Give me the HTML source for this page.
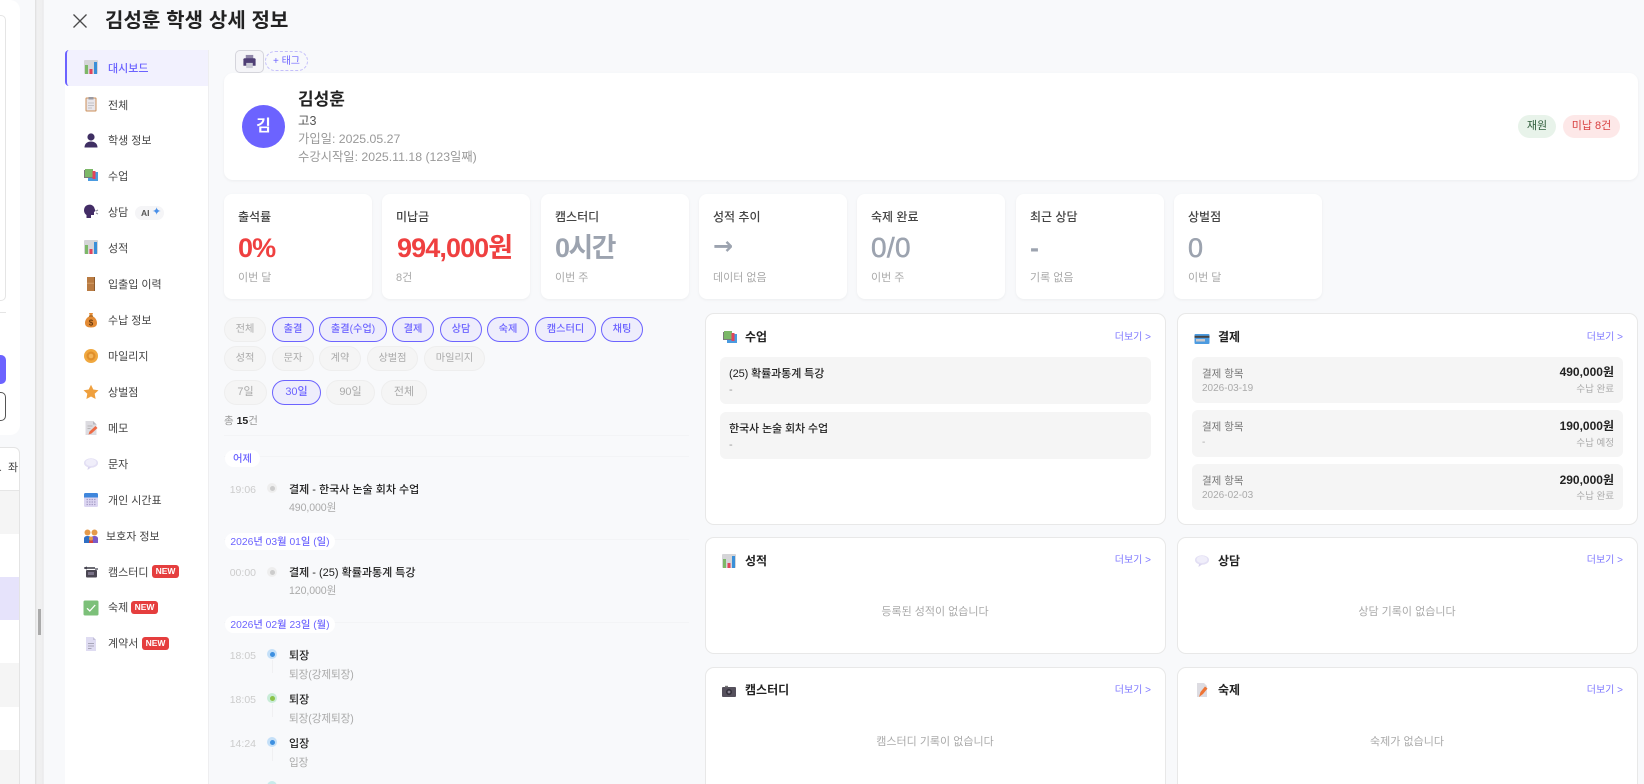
<!DOCTYPE html>
<html lang="ko"><head><meta charset="utf-8"><title>김성훈 학생 상세 정보</title>
<style>
*{box-sizing:border-box}
html,body{margin:0;padding:0;width:1644px;height:784px;overflow:hidden;background:#f8f9fb}
body{position:relative;font-family:"Liberation Sans","Noto Sans CJK KR",sans-serif;color:#222}
.a{position:absolute}
.t{position:absolute;white-space:nowrap;line-height:20px;height:20px}
.i{position:absolute;width:16px;height:16px}
.nav{font-size:11px;color:#444;left:108px;margin-top:1px}
.new{position:absolute;height:13px;background:#e53e3e;color:#fff;font-size:8.5px;font-weight:bold;line-height:13px;border-radius:3px;text-align:center;width:27px}
.stat{position:absolute;top:194px;height:105px;width:148px;background:#fff;border-radius:8px;box-shadow:0 1px 3px rgba(0,0,0,.05)}
.l{left:14px;top:13px;font-size:12px;color:#444;font-weight:500}
.v{left:14px;top:44px;font-size:27px;font-weight:bold;color:#9ca3af;letter-spacing:-.9px;line-height:20px}
.s{left:14px;top:74px;font-size:11px;color:#aaa}
.p{position:absolute;height:25px;border-radius:13px;border:1px solid #eee;background:#f5f5f5;color:#aaa;font-size:10.2px;line-height:23px;text-align:center;white-space:nowrap}
.on{background:#eeedfc;border-color:#6c63ff;color:#6c63ff;font-weight:500}
.d{position:absolute;left:225px;height:17px;background:#fff;border-radius:9px;color:#6c63ff;font-size:10.3px;font-weight:500;line-height:19px;text-align:center;white-space:nowrap}
.ln{position:absolute;height:1px;background:#f3f4f6;left:224px;width:465px}
.tm{left:216px;width:40px;text-align:right;font-size:10.5px;color:#ccc;margin-top:1px}
.ti{left:289px;font-size:11px;color:#222;font-weight:500;margin-top:1px}
.su{left:289px;font-size:10.6px;color:#aaa;letter-spacing:-.1px;margin-top:1px}
.o{position:absolute;left:267px;width:10px;height:10px;border-radius:50%}
.o b{position:absolute;left:2.5px;top:2.5px;width:5px;height:5px;border-radius:50%}
.vl{position:absolute;left:272px;width:1px;height:13px;background:#f0f0f2}
.c{position:absolute;background:#fff;border:1px solid #e8e8e8;border-radius:9px;width:461px}
.ct{font-size:12px;font-weight:bold;color:#222;margin-top:1px}
.m{font-size:10px;color:#7f78ff;text-align:right;width:60px}
.b{position:absolute;background:#f5f5f5;border-radius:6px;width:431px}
.bt{font-size:11px;font-weight:500;color:#222;letter-spacing:-.1px;margin-top:1px}
.e{font-size:11px;color:#aaa;width:300px;text-align:center;margin-top:1px}
.g{font-size:10.5px;color:#777;margin-top:1px}
.h{font-size:10px;color:#aaa;margin-top:1px}
.am{font-size:12px;font-weight:bold;color:#222;text-align:right;width:100px;margin-top:-1px}
.st{font-size:9.5px;color:#aaa;text-align:right;width:100px;margin-top:2px}
</style></head><body>
<svg width="0" height="0" style="position:absolute">
<symbol id="chart" viewBox="0 0 16 16"><rect x="1" y="1" width="14" height="14" rx="1" fill="#d5d5d8"/><rect x="2" y="6" width="3" height="9" fill="#7cb868"/><rect x="6.5" y="10" width="3" height="5" fill="#e2445c"/><rect x="11" y="3" width="3" height="12" fill="#3a8fd8"/></symbol>
<symbol id="clip" viewBox="0 0 16 16"><rect x="2.500" y="1.500" width="11" height="14" rx="1" fill="#cc8f58"/><rect x="3.500" y="2.500" width="9" height="12" fill="#e9e6ea"/><rect x="5.500" y="1" width="5" height="2.500" fill="#9a9aa2"/><path d="M5 7h6M5 9.500h6M5 12h4" stroke="#b5b5bb" stroke-width=".8"/></symbol>
<symbol id="bust" viewBox="0 0 16 16"><circle cx="8" cy="5" r="3.600" fill="#3f2f63"/><path d="M1.500 15.500c0-4 3-6 6.500-6s6.500 2 6.500 6z" fill="#3f2f63"/></symbol>
<symbol id="books" viewBox="0 0 16 16"><rect x="5" y="5" width="10" height="9" fill="#4a9be0"/><rect x="1" y="3" width="9" height="8" fill="#7a7a7a"/><rect x="2" y="2" width="8" height="8" fill="#7cb868"/><rect x="9.500" y="4" width="3" height="8" fill="#e2445c"/></symbol>
<symbol id="talk" viewBox="0 0 16 16"><path d="M1 7a5.500 5.500 0 0 1 10-3l1.500 4-1.500 1v3H8v3H3.500v-3C2 11 1 9.500 1 7z" fill="#432d66"/><path d="M13 8l2-1M13 10l2 1" stroke="#8a8a96" stroke-width="1"/></symbol>
<symbol id="door" viewBox="0 0 16 16"><rect x="4" y="1" width="8" height="14" fill="#b97b42"/><rect x="4" y="6.800" width="8" height=".8" fill="#d8a56e"/><rect x="11" y="1" width="1" height="14" fill="#8d5a2c"/></symbol>
<symbol id="bag" viewBox="0 0 16 16"><path d="M6 1h4l-1 3c3 1 5 4 5 7 0 3-2 4.500-6 4.500S2 14 2 11c0-3 2-6 5-7z" fill="#e38b35"/><rect x="6" y="3.500" width="4" height="1" fill="#8c5a20"/><text x="8" y="13.300" font-size="8" font-weight="bold" text-anchor="middle" fill="#6d3d10" font-family="Liberation Sans">$</text></symbol>
<symbol id="coin" viewBox="0 0 16 16"><circle cx="8" cy="8" r="7" fill="#f0a83f"/><circle cx="8" cy="8" r="4.500" fill="#e08f2c"/><circle cx="8" cy="8" r="2.300" fill="#f3b55a"/></symbol>
<symbol id="star" viewBox="0 0 16 16"><path d="M8 .8l2.300 4.700 5.200.7-3.800 3.600.9 5.200L8 12.500l-4.600 2.500.9-5.200L.5 6.200l5.200-.7z" fill="#efa03e"/></symbol>
<symbol id="memo" viewBox="0 0 16 16"><path d="M2.500 1H10l3.500 3.500V15h-11z" fill="#dcdbe0"/><path d="M10 1v3.500h3.500z" fill="#b9b8c0"/><path d="M4.500 6h5M4.500 8.500h3" stroke="#aaa" stroke-width=".8"/><path d="M5.500 14.500l1-3L12.500 6l2 2-6 5.500z" fill="#ee6b45"/></symbol>
<symbol id="bub" viewBox="0 0 16 16"><ellipse cx="8" cy="7" rx="7" ry="4.800" fill="#e3dff4"/><ellipse cx="8" cy="6.500" rx="5.500" ry="3.500" fill="#f0eefa"/><path d="M5 11l-.5 3L8 11.500z" fill="#d8d3ee"/></symbol>
<symbol id="cal" viewBox="0 0 16 16"><rect x="1" y="1" width="14" height="14" rx="1.500" fill="#dcd6f2"/><path d="M1 5.500v-3A1.500 1.500 0 0 1 2.500 1h11A1.500 1.500 0 0 1 15 2.500v3z" fill="#3f86dc"/><path d="M3.500 7.500h9M3.500 10h9M3.500 12.500h9" stroke="#a89fc8" stroke-width="1.200" stroke-dasharray="1.500 1"/></symbol>
<symbol id="fam" viewBox="0 0 16 16"><circle cx="4.500" cy="4.500" r="3" fill="#e59a4a"/><circle cx="11.500" cy="4.500" r="3" fill="#e59a4a"/><path d="M1 15V10.500C1 8.500 3 8 4.500 8S8 8.500 8 10.500V15z" fill="#2f6fc4"/><path d="M8 15V10.500C8 8.500 10 8 11.500 8S15 8.500 15 10.500V15z" fill="#7a5ac8"/><circle cx="8" cy="10.500" r="2" fill="#e59a4a"/><rect x="6" y="12.500" width="4" height="2.500" fill="#d8453a"/></symbol>
<symbol id="cam" viewBox="0 0 16 16"><rect x="3" y="3" width="9" height="2" fill="#6a6a72"/><path d="M1 3.500l3-1v3l-3-1z" fill="#44424f"/><rect x="3" y="6" width="11" height="7.500" rx="1" fill="#4a4652"/><rect x="5" y="8" width="6" height="3" fill="#7a7388"/><rect x="12" y="4" width="3" height="2" fill="#8c8c94"/></symbol>
<symbol id="cam2" viewBox="0 0 16 16"><rect x="1" y="4" width="14" height="10" rx="1" fill="#55505c"/><rect x="4" y="2.800" width="3" height="1.500" fill="#777"/><circle cx="8" cy="9" r="3" fill="#33303a"/><circle cx="8" cy="9" r="1.400" fill="#8d8796"/></symbol>
<symbol id="chk" viewBox="0 0 16 16"><rect x="0.500" y="0.500" width="15" height="15" rx="1.500" fill="#7cc079"/><path d="M4 8.300l2.800 2.700L12.200 5" fill="none" stroke="#fff" stroke-width="1.300"/></symbol>
<symbol id="doc" viewBox="0 0 16 16"><path d="M3 1h7l3 3v11H3z" fill="#dfdcf2"/><path d="M10 1v3h3z" fill="#c4c0da"/><path d="M5 7.500h6M5 10h6M5 12.500h3.500" stroke="#a8a6b8" stroke-width="1"/></symbol>
<symbol id="card" viewBox="0 0 16 16"><rect x="0.500" y="3" width="15" height="10" rx="1" fill="#4c9be0"/><rect x="0.500" y="4.800" width="15" height="2" fill="#444"/><rect x="2" y="8" width="9" height="2.500" fill="#c7c7cd"/></symbol>
<symbol id="prn" viewBox="0 0 16 16"><rect x="4" y="1" width="8" height="5" fill="#8f86a8"/><path d="M1.500 6.500A1.500 1.500 0 0 1 3 4.500h10a1.500 1.500 0 0 1 1.500 2V12.500h-13z" fill="#4f3f75"/><rect x="4.500" y="9.500" width="7" height="5.500" fill="#c9c9d4"/></symbol>
<symbol id="memo2" viewBox="0 0 16 16"><path d="M3 1h7l3 3v11H3z" fill="#dddce2"/><path d="M5 15l1.500-5L11 4.500l2.500 2-4.500 5.500z" fill="#ee7435"/></symbol>
</svg>

<!-- left background page -->
<div class="a" style="left:-20px;top:0;width:40px;height:435px;background:#fff;border-radius:0 10px 10px 0"></div>
<div class="a" style="left:-20px;top:15px;width:26px;height:286px;background:#fff;border:1px solid #e5e5e5;border-radius:5px"></div>
<div class="a" style="left:0;top:312px;width:6px;height:1px;background:#e5e5e5"></div>
<div class="a" style="left:-20px;top:355px;width:26px;height:29px;background:#6c63ff;border-radius:5px"></div>
<div class="a" style="left:-20px;top:392px;width:26px;height:29px;background:#fff;border:1px solid #555;border-radius:5px"></div>
<div class="a" style="left:-20px;top:447px;width:40px;height:337px;background:#fff;border:1px solid #e4e4e4;border-radius:6px 6px 0 0"></div>
<div class="a" style="left:0;top:490px;width:19px;height:44px;background:#f5f5f5;border-top:1px solid #e6e6e6"></div>
<div class="a" style="left:0;top:577px;width:19px;height:43px;background:#e6e3fb"></div>
<div class="a" style="left:0;top:663px;width:19px;height:44px;background:#f5f5f5"></div>
<div class="a" style="left:0;top:750px;width:19px;height:34px;background:#f5f5f5"></div>
<div class="t" style="left:8px;top:458px;font-size:11px;color:#444">좌</div>
<div class="t" style="left:-1px;top:458px;font-size:11px;color:#666">.</div>

<!-- splitter -->
<div class="a" style="left:35px;top:0;width:9px;height:784px;background:linear-gradient(90deg,#dedede 0,#e6e6e6 1px,#f0f0f1 2px,#efeff0 7px,#e9e9ea 8px,#f3f4f6 9px)"></div>
<div class="a" style="left:38px;top:609px;width:3px;height:26px;background:#aaa"></div>

<!-- header -->
<svg class="a" style="left:72px;top:13px" width="16" height="16" viewBox="0 0 16 16"><path d="M1.500 1.500l13 13M14.500 1.500l-13 13" stroke="#4a4a4a" stroke-width="1.300" fill="none"/></svg>
<div class="t" style="left:105px;top:9px;font-size:20px;font-weight:bold;color:#222;letter-spacing:.1px;line-height:24px;height:24px">김성훈 학생 상세 정보</div>

<!-- sidebar -->
<div class="a" style="left:65px;top:50px;width:144px;height:734px;background:#fff;border-right:1px solid #eeeef0"></div>
<div class="a" style="left:65px;top:50px;width:143px;height:36px;background:#f2f1fe;border-left:2px solid #6c63ff;border-radius:4px 0 0 4px"></div>
<svg class="i" style="left:83px;top:59px"><use href="#chart"/></svg><div class="t nav" style="top:58px;color:#6c63ff;font-weight:500">대시보드</div>
<svg class="i" style="left:83px;top:96px"><use href="#clip"/></svg><div class="t nav" style="top:95px">전체</div>
<svg class="i" style="left:83px;top:132px"><use href="#bust"/></svg><div class="t nav" style="top:130px">학생 정보</div>
<svg class="i" style="left:83px;top:167px"><use href="#books"/></svg><div class="t nav" style="top:166px">수업</div>
<svg class="i" style="left:83px;top:203px"><use href="#talk"/></svg><div class="t nav" style="top:202px">상담</div>
<div class="a" style="left:135px;top:206px;width:29px;height:14px;background:#f5f5f7;border-radius:7px"></div>
<div class="t" style="left:141px;top:203px;font-size:8.5px;font-weight:bold;color:#555">AI</div>
<div class="t" style="left:152px;top:202px;font-size:11px;color:#4a90e8">✦</div>
<svg class="i" style="left:83px;top:239px"><use href="#chart"/></svg><div class="t nav" style="top:238px">성적</div>
<svg class="i" style="left:83px;top:276px"><use href="#door"/></svg><div class="t nav" style="top:274px">입출입 이력</div>
<svg class="i" style="left:83px;top:312px"><use href="#bag"/></svg><div class="t nav" style="top:310px">수납 정보</div>
<svg class="i" style="left:83px;top:348px"><use href="#coin"/></svg><div class="t nav" style="top:346px">마일리지</div>
<svg class="i" style="left:83px;top:384px"><use href="#star"/></svg><div class="t nav" style="top:382px">상벌점</div>
<svg class="i" style="left:83px;top:420px"><use href="#memo"/></svg><div class="t nav" style="top:418px">메모</div>
<svg class="i" style="left:83px;top:456px"><use href="#bub"/></svg><div class="t nav" style="top:454px">문자</div>
<svg class="i" style="left:83px;top:492px"><use href="#cal"/></svg><div class="t nav" style="top:490px">개인 시간표</div>
<svg class="i" style="left:83px;top:528px"><use href="#fam"/></svg><div class="t nav" style="top:526px;left:106px">보호자 정보</div>
<svg class="i" style="left:83px;top:564px"><use href="#cam"/></svg><div class="t nav" style="top:562px">캠스터디</div><div class="new" style="left:152px;top:565px">NEW</div>
<svg class="i" style="left:83px;top:600px"><use href="#chk"/></svg><div class="t nav" style="top:597px">숙제</div><div class="new" style="left:131px;top:601px">NEW</div>
<svg class="i" style="left:83px;top:636px"><use href="#doc"/></svg><div class="t nav" style="top:633px">계약서</div><div class="new" style="left:142px;top:637px">NEW</div>

<!-- toolbar -->
<div class="a" style="left:235px;top:50px;width:29px;height:23px;background:#f5f5f8;border:1px solid #d5d5dc;border-radius:5px"></div>
<svg class="a" style="left:242px;top:54px" width="15" height="15"><use href="#prn"/></svg>
<div class="a" style="left:265px;top:51px;width:43px;height:20px;border:1px dashed #c4bffa;border-radius:10px;color:#6c63ff;font-size:10px;line-height:19px;text-align:center;white-space:nowrap">+ 태그</div>

<!-- profile -->
<div class="a" style="left:224px;top:73px;width:1414px;height:107px;background:#fff;border-radius:9px;box-shadow:0 1px 3px rgba(0,0,0,.05)"></div>
<div class="a" style="left:242px;top:105px;width:43px;height:43px;border-radius:50%;background:#6c63ff;color:#fff;font-size:16px;font-weight:bold;line-height:43px;text-align:center">김</div>
<div class="t" style="left:298px;top:90px;font-size:17px;font-weight:bold;color:#222">김성훈</div>
<div class="t" style="left:298px;top:111px;font-size:12.500px;color:#555">고3</div>
<div class="t" style="left:298px;top:129px;font-size:12.3px;color:#999">가입일: 2025.05.27</div>
<div class="t" style="left:298px;top:147px;font-size:12.3px;color:#999">수강시작일: 2025.11.18 (123일째)</div>
<div class="a" style="left:1518px;top:115px;width:38px;height:23px;border-radius:12px;background:#e8f3ea;color:#2f5d3a;font-size:11px;line-height:23px;text-align:center">재원</div>
<div class="a" style="left:1563px;top:115px;width:57px;height:23px;border-radius:12px;background:#fde8e8;color:#d84040;font-size:11px;line-height:23px;text-align:center">미납 8건</div>

<!-- stats -->
<div class="stat" style="left:224px"><div class="t l">출석률</div><div class="t v" style="color:#ef4040">0%</div><div class="t s">이번 달</div></div>
<div class="stat" style="left:382px"><div class="t l">미납금</div><div class="t v" style="color:#ef4040;left:15px">994,000원</div><div class="t s">8건</div></div>
<div class="stat" style="left:541px"><div class="t l">캠스터디</div><div class="t v" style="letter-spacing:-1.6px">0시간</div><div class="t s">이번 주</div></div>
<div class="stat" style="left:699px"><div class="t l">성적 추이</div><div class="t v" style="font-family:'DejaVu Sans',sans-serif;font-size:24px;letter-spacing:0;top:42px">→</div><div class="t s">데이터 없음</div></div>
<div class="stat" style="left:857px"><div class="t l">숙제 완료</div><div class="t v" style="font-weight:normal;font-size:28px;letter-spacing:.3px;-webkit-text-stroke:.5px #9ca3af">0/0</div><div class="t s">이번 주</div></div>
<div class="stat" style="left:1016px"><div class="t l">최근 상담</div><div class="t v">-</div><div class="t s">기록 없음</div></div>
<div class="stat" style="left:1174px"><div class="t l">상벌점</div><div class="t v" style="font-weight:normal;-webkit-text-stroke:.5px #9ca3af">0</div><div class="t s">이번 달</div></div>

<!-- filters -->
<div class="p" style="left:224px;top:317px;width:42px">전체</div>
<div class="p on" style="left:272px;top:317px;width:42px">출결</div>
<div class="p on" style="left:319px;top:317px;width:68px">출결(수업)</div>
<div class="p on" style="left:392px;top:317px;width:42px">결제</div>
<div class="p on" style="left:440px;top:317px;width:42px">상담</div>
<div class="p on" style="left:487px;top:317px;width:42px">숙제</div>
<div class="p on" style="left:535px;top:317px;width:61px">캠스터디</div>
<div class="p on" style="left:601px;top:317px;width:42px">채팅</div>
<div class="p" style="left:224px;top:346px;width:42px">성적</div>
<div class="p" style="left:272px;top:346px;width:42px">문자</div>
<div class="p" style="left:319px;top:346px;width:42px">계약</div>
<div class="p" style="left:367px;top:346px;width:51px">상벌점</div>
<div class="p" style="left:424px;top:346px;width:61px">마일리지</div>
<div class="p" style="left:224px;top:380px;width:43px;font-size:11px">7일</div>
<div class="p on" style="left:272px;top:380px;width:49px;font-size:11px">30일</div>
<div class="p" style="left:326px;top:380px;width:49px;font-size:11px">90일</div>
<div class="p" style="left:381px;top:380px;width:46px;font-size:11px">전체</div>
<div class="t" style="left:224px;top:411px;font-size:10.5px;color:#999">총 <b style="color:#222">15</b>건</div>
<div class="ln" style="top:435px"></div>

<!-- timeline -->
<div class="ln" style="top:456px"></div>
<div class="d" style="top:450px;width:35px">어제</div>
<div class="t tm" style="top:479px">19:06</div><div class="o" style="top:483px;background:#eee"><b style="background:#ccc"></b></div>
<div class="t ti" style="top:479px">결제 - 한국사 논술 회차 수업</div><div class="t su" style="top:497px">490,000원</div>
<div class="ln" style="top:539px"></div>
<div class="d" style="top:533px;width:110px">2026년 03월 01일 (일)</div>
<div class="t tm" style="top:562px">00:00</div><div class="o" style="top:567px;background:#eee"><b style="background:#ccc"></b></div>
<div class="t ti" style="top:562px">결제 - (25) 확률과통계 특강</div><div class="t su" style="top:580px">120,000원</div>
<div class="ln" style="top:622px"></div>
<div class="d" style="top:616px;width:110px">2026년 02월 23일 (월)</div>
<div class="t tm" style="top:645px">18:05</div><div class="o" style="top:649px;background:#c5e0f8"><b style="background:#3d8fe0"></b></div><div class="vl" style="top:660px"></div>
<div class="t ti" style="top:645px">퇴장</div><div class="t su" style="top:664px">퇴장(강제퇴장)</div>
<div class="t tm" style="top:689px">18:05</div><div class="o" style="top:693px;background:#c9ecd8"><b style="background:#8bc34a"></b></div><div class="vl" style="top:704px"></div>
<div class="t ti" style="top:689px">퇴장</div><div class="t su" style="top:708px">퇴장(강제퇴장)</div>
<div class="t tm" style="top:733px">14:24</div><div class="o" style="top:737px;background:#c5e0f8"><b style="background:#3d8fe0"></b></div><div class="vl" style="top:748px"></div>
<div class="t ti" style="top:733px">입장</div><div class="t su" style="top:752px">입장</div>
<div class="o" style="top:781px;background:#c9ecec"></div>

<!-- right cards -->
<div class="c" style="left:705px;top:313px;height:212px"></div>
<svg class="i" style="left:722px;top:329px"><use href="#books"/></svg>
<div class="t ct" style="left:745px;top:326px">수업</div>
<div class="t m" style="left:1091px;top:328px">더보기 &gt;</div>
<div class="b" style="left:720px;top:357px;height:47px"></div>
<div class="t bt" style="left:729px;top:363px">(25) 확률과통계 특강</div><div class="t" style="left:729px;top:380px;font-size:11px;color:#999">-</div>
<div class="b" style="left:720px;top:412px;height:47px"></div>
<div class="t bt" style="left:729px;top:418px">한국사 논술 회차 수업</div><div class="t" style="left:729px;top:435px;font-size:11px;color:#999">-</div>

<div class="c" style="left:1177px;top:313px;height:212px"></div>
<svg class="i" style="left:1194px;top:331px"><use href="#card"/></svg>
<div class="t ct" style="left:1218px;top:326px">결제</div>
<div class="t m" style="left:1563px;top:328px">더보기 &gt;</div>
<div class="b" style="left:1192px;top:357px;height:46px"></div>
<div class="t g" style="left:1202px;top:363px">결제 항목</div><div class="t h" style="left:1202px;top:378px">2026-03-19</div>
<div class="t am" style="left:1514px;top:363px">490,000원</div><div class="t st" style="left:1514px;top:378px">수납 완료</div>
<div class="b" style="left:1192px;top:410px;height:47px"></div>
<div class="t g" style="left:1202px;top:416px">결제 항목</div><div class="t h" style="left:1202px;top:432px">-</div>
<div class="t am" style="left:1514px;top:417px">190,000원</div><div class="t st" style="left:1514px;top:432px">수납 예정</div>
<div class="b" style="left:1192px;top:464px;height:46px"></div>
<div class="t g" style="left:1202px;top:470px">결제 항목</div><div class="t h" style="left:1202px;top:485px">2026-02-03</div>
<div class="t am" style="left:1514px;top:471px">290,000원</div><div class="t st" style="left:1514px;top:485px">수납 완료</div>

<div class="c" style="left:705px;top:537px;height:117px"></div>
<svg class="i" style="left:721px;top:553px"><use href="#chart"/></svg>
<div class="t ct" style="left:745px;top:550px">성적</div>
<div class="t m" style="left:1091px;top:551px">더보기 &gt;</div>
<div class="t e" style="left:785px;top:601px">등록된 성적이 없습니다</div>

<div class="c" style="left:1177px;top:537px;height:117px"></div>
<svg class="i" style="left:1194px;top:553px"><use href="#bub"/></svg>
<div class="t ct" style="left:1218px;top:550px">상담</div>
<div class="t m" style="left:1563px;top:551px">더보기 &gt;</div>
<div class="t e" style="left:1257px;top:601px">상담 기록이 없습니다</div>

<div class="c" style="left:705px;top:667px;height:130px"></div>
<svg class="i" style="left:721px;top:683px"><use href="#cam2"/></svg>
<div class="t ct" style="left:745px;top:679px">캠스터디</div>
<div class="t m" style="left:1091px;top:681px">더보기 &gt;</div>
<div class="t e" style="left:785px;top:731px">캠스터디 기록이 없습니다</div>

<div class="c" style="left:1177px;top:667px;height:130px"></div>
<svg class="i" style="left:1194px;top:682px"><use href="#memo2"/></svg>
<div class="t ct" style="left:1218px;top:679px">숙제</div>
<div class="t m" style="left:1563px;top:681px">더보기 &gt;</div>
<div class="t e" style="left:1257px;top:731px">숙제가 없습니다</div>
</body></html>
